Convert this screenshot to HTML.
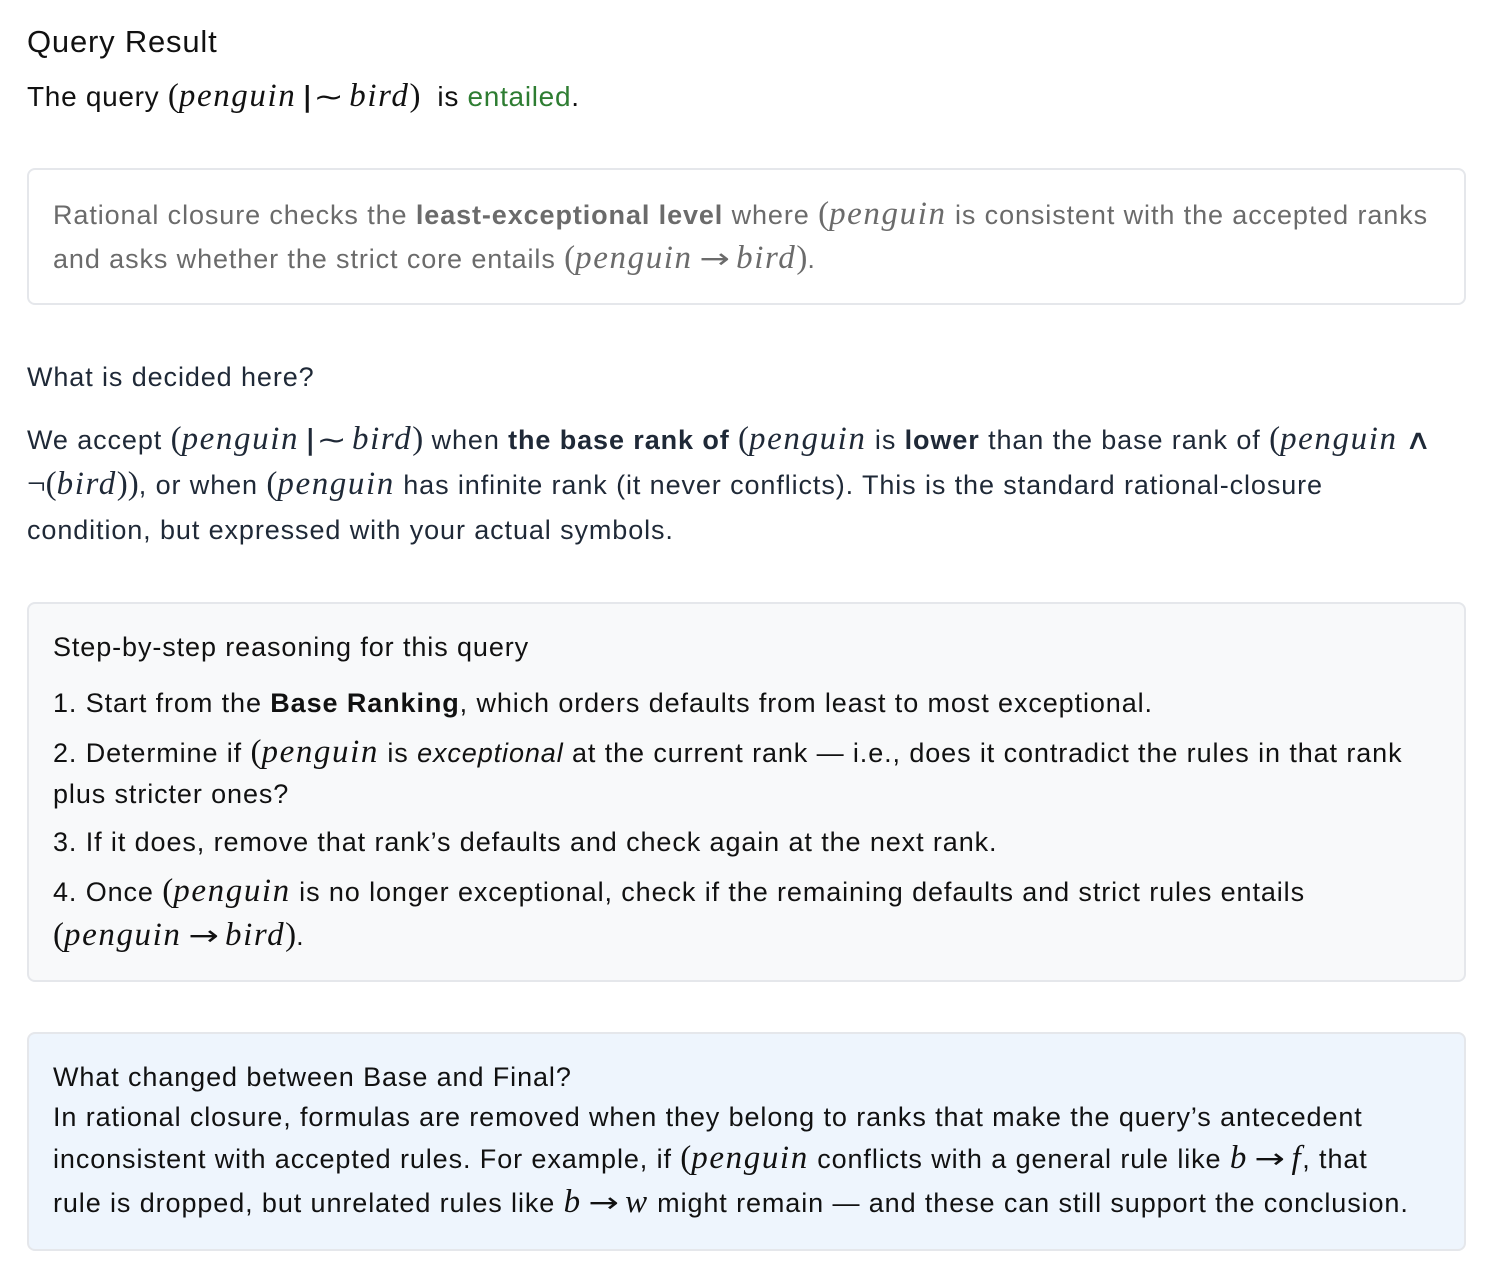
<!DOCTYPE html>
<html><head><meta charset="utf-8"><style>
body{margin:0;width:1498px;height:1284px;background:#fff;font-family:"Liberation Sans",sans-serif;position:relative;overflow:hidden;color:#111}
.l{position:absolute;white-space:nowrap;font-size:27px;line-height:30px;letter-spacing:0.9px}
.m{font-family:"Liberation Serif",serif;font-style:italic;font-size:33px;letter-spacing:1.6px}
.r{font-family:"Liberation Serif",serif;font-size:33px;letter-spacing:0}
.op{font-family:"DejaVu Sans",sans-serif;font-size:28px;margin:0 10px;letter-spacing:0;display:inline-block;transform:scaleX(1.3)}
.box{position:absolute;left:27px;width:1439px;border:2px solid #e5e7eb;border-radius:8px;box-sizing:border-box}
b{font-weight:700}
</style></head><body>
<div class="l" style="left:27px;top:27px;font-size:31px;letter-spacing:0.8px;color:#111">Query Result</div>
<div class="l" style="left:27px;top:81px;font-size:28px;letter-spacing:0.7px">The query <span class="r">(</span><span class="m">penguin</span><span class="op">|~</span><span class="m">bird</span><span class="r">)</span>&nbsp; is <span style="color:#2e7d32">entailed</span>.</div>

<div class="box" style="top:168px;height:137px"></div>
<div class="l" style="left:53px;top:199px;color:#6b6b6b">Rational closure checks the <b>least-exceptional level</b> where <span class="r">(</span><span class="m">penguin</span> is consistent with the accepted ranks</div>
<div class="l" style="left:53px;top:243px;color:#6b6b6b">and asks whether the strict core entails <span class="r">(</span><span class="m">penguin</span><span class="op">→</span><span class="m">bird</span><span class="r">)</span>.</div>

<div class="l" style="left:27px;top:362px;color:#1f2937">What is decided here?</div>
<div class="l" style="left:27px;top:424px;color:#1f2937">We accept <span class="r">(</span><span class="m">penguin</span><span class="op">|~</span><span class="m">bird</span><span class="r">)</span> when <b>the base rank of</b> <span class="r">(</span><span class="m">penguin</span> is <b>lower</b> than the base rank of <span class="r">(</span><span class="m">penguin</span><span class="op">∧</span></div>
<div class="l" style="left:27px;top:469px;color:#1f2937"><span class="r">¬(</span><span class="m">bird</span><span class="r">))</span>, or when <span class="r">(</span><span class="m">penguin</span> has infinite rank (it never conflicts). This is the standard rational-closure</div>
<div class="l" style="left:27px;top:515px;color:#1f2937">condition, but expressed with your actual symbols.</div>

<div class="box" style="top:602px;height:380px;background:#f8f9fa"></div>
<div class="l" style="left:53px;top:632px">Step-by-step reasoning for this query</div>
<div class="l" style="left:53px;top:688px">1. Start from the <b>Base Ranking</b>, which orders defaults from least to most exceptional.</div>
<div class="l" style="left:53px;top:737px">2. Determine if <span class="r">(</span><span class="m">penguin</span> is <i>exceptional</i> at the current rank — i.e., does it contradict the rules in that rank</div>
<div class="l" style="left:53px;top:779px">plus stricter ones?</div>
<div class="l" style="left:53px;top:827px">3. If it does, remove that rank’s defaults and check again at the next rank.</div>
<div class="l" style="left:53px;top:876px">4. Once <span class="r">(</span><span class="m">penguin</span> is no longer exceptional, check if the remaining defaults and strict rules entails</div>
<div class="l" style="left:53px;top:920px"><span class="r">(</span><span class="m">penguin</span><span class="op">→</span><span class="m">bird</span><span class="r">)</span>.</div>

<div class="box" style="top:1032px;height:219px;background:#eef5fd"></div>
<div class="l" style="left:53px;top:1062px">What changed between Base and Final?</div>
<div class="l" style="left:53px;top:1102px">In rational closure, formulas are removed when they belong to ranks that make the query’s antecedent</div>
<div class="l" style="left:53px;top:1143px">inconsistent with accepted rules. For example, if <span class="r">(</span><span class="m">penguin</span> conflicts with a general rule like <span class="m">b</span><span class="op">→</span><span class="m">f</span>, that</div>
<div class="l" style="left:53px;top:1187px">rule is dropped, but unrelated rules like <span class="m">b</span><span class="op">→</span><span class="m">w</span> might remain — and these can still support the conclusion.</div>
</body></html>
